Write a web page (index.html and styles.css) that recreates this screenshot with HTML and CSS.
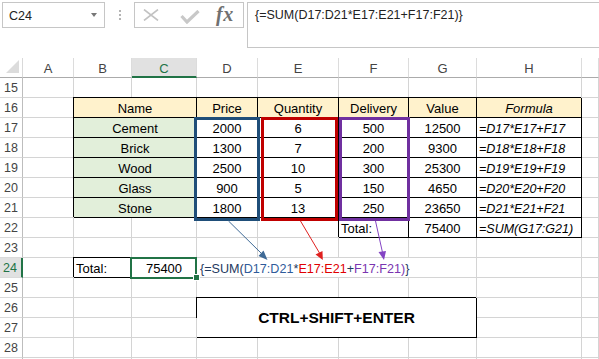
FILE: index.html
```html
<!DOCTYPE html>
<html>
<head>
<meta charset="utf-8">
<link rel="stylesheet" href="styles.css">
</head>
<body>
<div class="page">
  <div class="top">
    <div class="namebox"><span>C24</span><span class="drop"></span></div>
    <div class="dots"><i></i><i></i><i></i></div>
    <div class="btns">
      <svg class="ico-x" width="16" height="12" viewBox="0 0 16 12"><path d="M1 0.5 L15 11.5 M1 11.5 L15 0.5" stroke="#c2c2c2" stroke-width="1.6" fill="none"/></svg>
      <svg class="ico-ok" width="20" height="14" viewBox="0 0 20 14"><path d="M1.5 6 L7 12 L18.5 1" stroke="#c8c8c8" stroke-width="3.2" fill="none"/></svg>
      <span class="fx">fx</span>
    </div>
    <div class="fbar">{=SUM(D17:D21*E17:E21+F17:F21)}</div>
  </div>

  <div class="sheet">
    <div class="corner"></div><div class="ch">A</div><div class="ch">B</div><div class="ch sel">C</div><div class="ch">D</div><div class="ch">E</div><div class="ch">F</div><div class="ch">G</div><div class="ch">H</div><div class="ch"></div>

    <div class="rh">15</div><div class="c"></div><div class="c"></div><div class="c"></div><div class="c"></div><div class="c"></div><div class="c"></div><div class="c"></div><div class="c"></div><div class="c"></div>

    <div class="rh">16</div><div class="c"></div><div class="c b y s2">Name</div><div class="c b y">Price</div><div class="c b y">Quantity</div><div class="c b y">Delivery</div><div class="c b y">Value</div><div class="c b y i">Formula</div><div class="c"></div>

    <div class="rh">17</div><div class="c"></div><div class="c b g s2">Cement</div><div class="c b">2000</div><div class="c b">6</div><div class="c b">500</div><div class="c b">12500</div><div class="c b i l">=D17*E17+F17</div><div class="c"></div>

    <div class="rh">18</div><div class="c"></div><div class="c b g s2">Brick</div><div class="c b">1300</div><div class="c b">7</div><div class="c b">200</div><div class="c b">9300</div><div class="c b i l">=D18*E18+F18</div><div class="c"></div>

    <div class="rh">19</div><div class="c"></div><div class="c b g s2">Wood</div><div class="c b">2500</div><div class="c b">10</div><div class="c b">300</div><div class="c b">25300</div><div class="c b i l">=D19*E19+F19</div><div class="c"></div>

    <div class="rh">20</div><div class="c"></div><div class="c b g s2">Glass</div><div class="c b">900</div><div class="c b">5</div><div class="c b">150</div><div class="c b">4650</div><div class="c b i l">=D20*E20+F20</div><div class="c"></div>

    <div class="rh">21</div><div class="c"></div><div class="c b g s2">Stone</div><div class="c b">1800</div><div class="c b">13</div><div class="c b">250</div><div class="c b">23650</div><div class="c b i l">=D21*E21+F21</div><div class="c"></div>

    <div class="rh">22</div><div class="c"></div><div class="c"></div><div class="c"></div><div class="c"></div><div class="c"></div><div class="c b l">Total:</div><div class="c b">75400</div><div class="c b i l">=SUM(G17:G21)</div><div class="c"></div>

    <div class="rh">23</div><div class="c"></div><div class="c"></div><div class="c"></div><div class="c"></div><div class="c"></div><div class="c"></div><div class="c"></div><div class="c"></div><div class="c"></div>

    <div class="rh sel">24</div><div class="c"></div><div class="c b l">Total:</div><div class="c">75400</div><div class="c l s4 fm"><span class="k">{=SUM(</span><span class="bl">D17:D21</span><span class="k">*</span><span class="rd">E17:E21</span><span class="k">+</span><span class="pu">F17:F21)</span><span class="k">}</span></div><div class="c"></div><div class="c"></div>

    <div class="rh">25</div><div class="c"></div><div class="c"></div><div class="c"></div><div class="c"></div><div class="c"></div><div class="c"></div><div class="c"></div><div class="c"></div><div class="c"></div>

    <div class="rh">26</div><div class="c"></div><div class="c"></div><div class="c"></div><div class="c b box">CTRL+SHIFT+ENTER</div><div class="c"></div><div class="c"></div>

    <div class="rh">27</div><div class="c"></div><div class="c"></div><div class="c"></div><div class="c"></div><div class="c"></div>

    <div class="rh">28</div><div class="c"></div><div class="c"></div><div class="c"></div><div class="c"></div><div class="c"></div><div class="c"></div><div class="c"></div><div class="c"></div><div class="c"></div>

    <div class="rh"></div><div class="c"></div><div class="c"></div><div class="c"></div><div class="c"></div><div class="c"></div><div class="c"></div><div class="c"></div><div class="c"></div><div class="c"></div>
  </div>

  <div class="range r-blue"></div>
  <div class="range r-red"></div>
  <div class="range r-purple"></div>
  <div class="cursor"></div>
  <div class="handle"></div>

  <svg class="arrows" width="599" height="359" viewBox="0 0 599 359">
    <line x1="228.5" y1="221" x2="262" y2="254" stroke="#3f6a96" stroke-width="1"/>
    <polygon points="267.5,260 258.5,256 263.5,250.5" fill="#3f6a96"/>
    <line x1="300.5" y1="221" x2="319.5" y2="253" stroke="#e0201f" stroke-width="1"/>
    <polygon points="322.8,260 315.5,254.5 322.5,251" fill="#e0201f"/>
    <line x1="375.5" y1="221" x2="382.5" y2="252.5" stroke="#8444c4" stroke-width="1"/>
    <polygon points="384,260 378.5,252 386,251" fill="#8444c4"/>
  </svg>
</div>
</body>
</html>
```

FILE: styles.css
```css
html, body {
  margin: 0;
  padding: 0;
  background: #fff;
  overflow: hidden;
}
.page {
  position: relative;
  width: 599px;
  height: 359px;
  overflow: hidden;
  font-family: "Liberation Sans", Arial, sans-serif;
}
.top {
  height: 58px;
  box-sizing: border-box;
  display: flex;
  align-items: flex-start;
  padding: 2px 0 0 2px;
}
.namebox {
  width: 103px;
  height: 26px;
  box-sizing: border-box;
  border: 1px solid #c6c6c6;
  display: flex;
  align-items: center;
  justify-content: space-between;
  padding: 1px 7px 0 6px;
  font-size: 12.5px;
  color: #222;
}
.drop {
  width: 0;
  height: 0;
  border-left: 3.5px solid transparent;
  border-right: 3.5px solid transparent;
  border-top: 4px solid #777;
  margin-bottom: 1px;
}
.dots {
  margin: 8px 0 0 14px;
  width: 2px;
  display: flex;
  flex-direction: column;
  gap: 2px;
}
.dots i {
  width: 2px;
  height: 2px;
  background: #b4b4b4;
}
.btns {
  margin-left: 13px;
  width: 110px;
  height: 26px;
  box-sizing: border-box;
  border: 1px solid #c6c6c6;
  display: flex;
  align-items: center;
  padding: 0 0 0 8px;
}
.ico-x { margin-top: 0; }
.ico-ok { margin-left: 21px; margin-top: 4px; }
.fx {
  margin-left: 16px;
  font-family: "Liberation Serif", "Times New Roman", serif;
  font-style: italic;
  font-weight: bold;
  font-size: 20px;
  letter-spacing: 0.5px;
  color: #707070;
  margin-top: -1px;
}
.fbar {
  flex: 1;
  margin-left: 3px;
  margin-right: -6px;
  height: 46px;
  box-sizing: border-box;
  border: 1px solid #c6c6c6;
  padding: 4px 0 0 7px;
  font-size: 12.5px;
  line-height: 16px;
  color: #222;
}

.sheet {
  display: grid;
  grid-template-columns: 23px 51px 58px 65px 61px 81px 70px 68px 105px 1fr;
  grid-auto-rows: 20px;
}
.sheet > div {
  box-sizing: border-box;
  border-right: 1px solid #d4d4d4;
  border-bottom: 1px solid #d4d4d4;
  white-space: nowrap;
  overflow: hidden;
}
.corner {
  display: flex;
  justify-content: flex-end;
  align-items: flex-end;
  padding: 0 3px 4px 0;
  border-bottom-color: #ababab !important;
  border-right-color: #d9d9d9 !important;
}
.corner::after {
  content: "";
  width: 0;
  height: 0;
  border-left: 13px solid transparent;
  border-bottom: 13px solid #dcdcdc;
}
.ch {
  text-align: center;
  font-size: 13px;
  line-height: 18px;
  padding-top: 2px;
  color: #444;
  border-right-color: #dcdcdc !important;
  border-bottom-color: #ababab !important;
}
.ch.sel {
  background: #e1e1e1;
  color: #217346;
  border-bottom: 2px solid #217346 !important;
}
.rh {
  text-align: center;
  font-size: 12.5px;
  line-height: 18px;
  padding-top: 1px;
  color: #444;
  border-right-color: #bdbdbd !important;
  border-bottom-color: #dadada !important;
}
.rh.sel {
  background: #e1e1e1;
  color: #217346;
  border-right: 2px solid #217346 !important;
  padding-right: 1px;
}
.c {
  text-align: center;
  font-size: 13px;
  line-height: 18px;
  padding-top: 2px;
  color: #000;
}
.c.l { text-align: left; padding-left: 2px; }
.c.i { font-style: italic; }
.c.i.l { font-size: 12.5px; }
.c.y { background: #fff2cc; }
.c.g { background: #e2efda; }
.c.b {
  border-right-color: #000;
  border-bottom-color: #000;
  box-shadow: -1px -1px 0 0 #000;
}
.s2 { grid-column: span 2; }
.s4 { grid-column: span 4; }
.fm { padding-left: 3px !important; font-size: 12.6px; }
.fm .k { color: #1f3a5f; }
.fm .bl { color: #2f5b9a; }
.fm .rd { color: #e00000; }
.fm .pu { color: #7a35b0; }
.box {
  grid-column: span 4;
  grid-row: span 2;
  display: flex;
  align-items: center;
  justify-content: center;
  padding: 1px 0 0 0 !important;
  font-weight: bold;
  font-size: 15.5px;
  background: #fff;
}

.range {
  position: absolute;
  top: 117px;
  height: 104px;
  box-sizing: border-box;
  border: 3px solid;
}
.r-blue { left: 194px; width: 66px; border-color: #1f4e79; }
.r-red { left: 261px; width: 77px; border-color: #c00000; }
.r-purple { left: 339px; width: 71px; border-color: #7030a0; }
.cursor {
  position: absolute;
  left: 130px;
  top: 257px;
  width: 67px;
  height: 22px;
  box-sizing: border-box;
  border: 2px solid #217346;
}
.handle {
  position: absolute;
  left: 193px;
  top: 274px;
  width: 7px;
  height: 7px;
  box-sizing: border-box;
  background: #217346;
  border: 1px solid #fff;
}
.arrows {
  position: absolute;
  left: 0;
  top: 0;
  pointer-events: none;
}
```
